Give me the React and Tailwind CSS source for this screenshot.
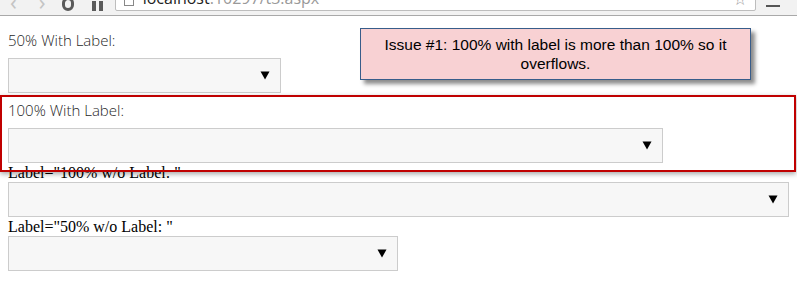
import React from "react";

var Arrow = function () {
  return (<svg width="10" height="9" viewBox="0 0 10 9" className="shrink-0">
      <path d="M0.5 0.5 L9.5 0.5 L5 8.5 Z" fill="#000"/>
    </svg>);
};

var FakeSelect = function (_a) {
  var width = _a.width;
  return (<div className={"flex h-[35px] items-center justify-end border border-[#cccccc] bg-[#f7f7f7] pr-[10px] " + width}>
      <Arrow />
    </div>);
};

var Toolbar = function () {
  return (<div className="flex h-[16px] items-end overflow-hidden border-b border-[#a9a9a9] bg-[#f2f2f2]">
      <div className="mb-[3px] flex items-end gap-[22px] pl-[10px] text-[#c4c4c4]">
        <span className="text-[22px] leading-none">‹</span>
        <span className="text-[22px] leading-none">›</span>
      </div>
      <div className="mb-[4px] ml-[16px] h-[14px] w-[12px] rounded-full border-[3px] border-[#5a5a5a]"/>
      <div className="mb-[4px] ml-[18px] flex gap-[3px]">
        <div className="h-[10px] w-[4px] bg-[#5a5a5a]"/>
        <div className="h-[10px] w-[4px] bg-[#5a5a5a]"/>
      </div>
      <div className="mb-[4px] ml-[12px] flex h-[30px] w-[641px] items-end rounded-[2px] border border-[#bdbdbd] bg-white pb-[3px] pl-[8px]">
        <div className="mb-[1px] h-[12px] w-[10px] border border-[#888]"/>
        <span className="ml-[9px] font-['Open_Sans',sans-serif] text-[16px] leading-[18px] text-[#222]">
          localhost<span className="text-[#999]">:10297/t3.aspx</span>
        </span>
        <span className="ml-auto mr-[8px] text-[16px] leading-[16px] text-[#999]">☆</span>
      </div>
      <div className="mb-[8px] ml-[10px] h-[2px] w-[14px] bg-[#555]"/>
    </div>);
};

var App = function () {
  return (<div className="relative h-[286px] w-[797px] overflow-hidden bg-white">
      <Toolbar />
      <div className="pl-[8px] pt-[7px]">
        <div className="h-[35px] pt-[7px] font-['Open_Sans',sans-serif] text-[15px] font-light leading-[21px] text-[#1f1f1f]">
          50% With Label:
        </div>
        <FakeSelect width="w-[273px]"/>
        <div className="h-[35px] pt-[7px] font-['Open_Sans',sans-serif] text-[15px] font-light leading-[21px] text-[#1f1f1f]">
          100% With Label:
        </div>
        <FakeSelect width="w-[655px]"/>
        <div className="h-[19px] font-['Liberation_Serif',serif] text-[16px] leading-[19px] text-black">
          Label="100% w/o Label: "
        </div>
        <FakeSelect width="w-[781px]"/>
        <div className="h-[19px] font-['Liberation_Serif',serif] text-[16px] leading-[19px] text-black">
          Label="50% w/o Label: "
        </div>
        <FakeSelect width="w-[390px]"/>
      </div>

      <div className="absolute left-[0px] top-[95px] h-[77px] w-[796px] border-2 border-[#c00000] shadow-[0_2px_5px_rgba(0,0,0,0.35)]"/>

      <div className="absolute left-[360px] top-[28px] flex h-[52px] w-[391px] items-center justify-center border border-[#385d8a] bg-[#f8d1d3] px-[8px] text-center font-['Liberation_Sans',Arial,sans-serif] text-[15.5px] leading-[19px] text-black shadow-[4px_4px_4px_rgba(0,0,0,0.45)]">
        Issue #1: 100% with label is more than 100% so it overflows.
      </div>
    </div>);
};

export default App;
